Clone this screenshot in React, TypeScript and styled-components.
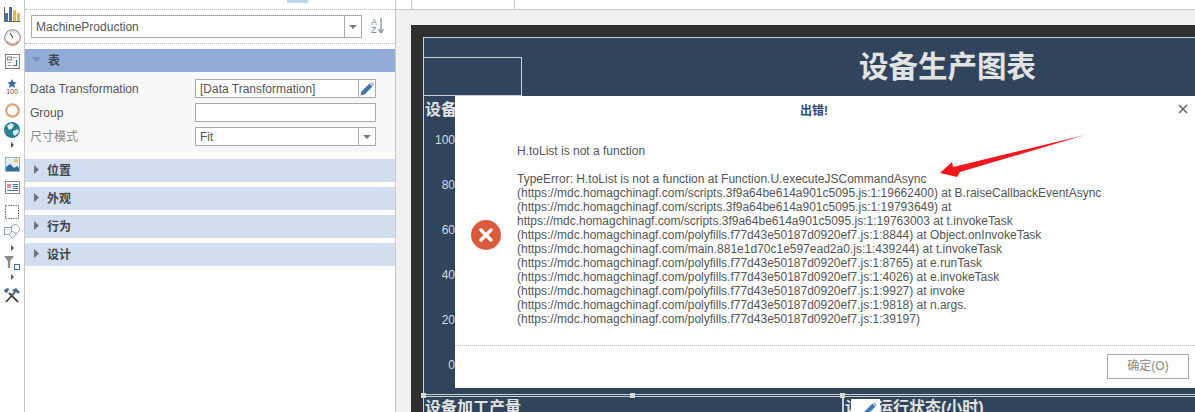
import styled, { createGlobalStyle } from 'styled-components'

const GlobalStyle = createGlobalStyle`
  html, body {
    margin: 0;
    padding: 0;
    background: #fff;
    overflow: hidden;
  }
  * {
    box-sizing: border-box;
  }
`

const errorLines = [
  'H.toList is not a function',
  '\u00a0',
  'TypeError: H.toList is not a function at Function.U.executeJSCommandAsync',
  '(https://mdc.homagchinagf.com/scripts.3f9a64be614a901c5095.js:1:19662400) at B.raiseCallbackEventAsync',
  '(https://mdc.homagchinagf.com/scripts.3f9a64be614a901c5095.js:1:19793649) at',
  'https://mdc.homagchinagf.com/scripts.3f9a64be614a901c5095.js:1:19763003 at t.invokeTask',
  '(https://mdc.homagchinagf.com/polyfills.f77d43e50187d0920ef7.js:1:8844) at Object.onInvokeTask',
  '(https://mdc.homagchinagf.com/main.881e1d70c1e597ead2a0.js:1:439244) at t.invokeTask',
  '(https://mdc.homagchinagf.com/polyfills.f77d43e50187d0920ef7.js:1:8765) at e.runTask',
  '(https://mdc.homagchinagf.com/polyfills.f77d43e50187d0920ef7.js:1:4026) at e.invokeTask',
  '(https://mdc.homagchinagf.com/polyfills.f77d43e50187d0920ef7.js:1:9927) at invoke',
  '(https://mdc.homagchinagf.com/polyfills.f77d43e50187d0920ef7.js:1:9818) at n.args.',
  '(https://mdc.homagchinagf.com/polyfills.f77d43e50187d0920ef7.js:1:39197)',
]

const axisLabels = ['100', '80', '60', '40', '20', '0']
const collapsedSections = ['位置', '外观', '行为', '设计']

const Caret = () => (
  <svg width="5" height="9" viewBox="0 0 5 9">
    <path d="M0 0l5 4.5L0 9z" fill="#6b7580" />
  </svg>
)

const DropArrow = () => (
  <svg width="8" height="4" viewBox="0 0 8 4">
    <path d="M0 0h8L4 4z" fill="#7a7a7a" />
  </svg>
)

const Pencil = () => (
  <svg width="14" height="14" viewBox="0 0 14 14">
    <path d="M0.5 13.5l1-4L9.5 1.5l3 3-8 8z" fill="#3f77ad" />
    <path d="M10.5 0.8l.8-.4 2.3 2.3-.6 1z" fill="#3f77ad" />
  </svg>
)

const ToolIcons = () => (
  <Tools>
    <ToolSlot $height={22}>
      <svg width="16" height="15" viewBox="0 0 16 15">
        <rect x="1" y="6" width="3" height="8" fill="#3f70a8" />
        <rect x="5" y="0" width="3" height="14" fill="#3f70a8" />
        <rect x="9" y="3" width="3" height="11" fill="#e2b93f" />
        <rect x="13" y="6" width="3" height="8" fill="#e2b93f" />
        <path d="M0 14.5h16M0.5 0v15" stroke="#666" />
      </svg>
    </ToolSlot>
    <ToolSlot $height={25}>
      <svg width="17" height="17" viewBox="0 0 17 17">
        <circle cx="8.5" cy="8.5" r="7.8" fill="#fff" stroke="#777" />
        <path d="M2.8 12a6.6 6.6 0 0 0 11.4 0" fill="none" stroke="#dc9b86" strokeWidth="1.6" />
        <path d="M2.2 7a6.6 6.6 0 0 1 12.6 0" fill="none" stroke="#d9d9d9" strokeWidth="1" />
        <path d="M6 4l3 5" stroke="#444" strokeWidth="1.1" />
      </svg>
    </ToolSlot>
    <ToolSlot $height={25}>
      <svg width="15" height="15" viewBox="0 0 15 15">
        <rect x="0.5" y="0.5" width="14" height="14" fill="#fff" stroke="#808080" />
        <rect x="2.5" y="3" width="4" height="3" fill="none" stroke="#808080" />
        <path d="M8 3.5h4.5M2.5 8.5h4M2.5 11.5h4" stroke="#a0a0a0" />
        <path d="M11.5 6v5.5H8" fill="none" stroke="#2f6da8" strokeWidth="1.2" />
      </svg>
    </ToolSlot>
    <ToolSlot $height={24}>
      <StarIcon>
        <svg width="10" height="9" viewBox="0 0 11 10">
          <path d="M5.5 0l1.6 3.4 3.7.4-2.8 2.4.9 3.8-3.4-2-3.4 2 .9-3.8L.2 3.8l3.7-.4z" fill="#3e67a6" />
        </svg>
        <StarValue>100</StarValue>
      </StarIcon>
    </ToolSlot>
    <ToolSlot $height={19}>
      <svg width="15" height="15" viewBox="0 0 15 15">
        <circle cx="7.5" cy="7.5" r="6.2" fill="none" stroke="#dfa473" strokeWidth="2.2" />
      </svg>
    </ToolSlot>
    <ToolSlot $height={20}>
      <svg width="16" height="16" viewBox="0 0 16 16">
        <circle cx="8" cy="8" r="8" fill="#2a7f96" />
        <path d="M3 4l4-3 3 2-2 4-3 1zM9 9l5-2 1 3-4 4-2-2z" fill="#d8eef2" />
      </svg>
    </ToolSlot>
    <ToolSlot $height={15}>
      <TinyCaret />
    </ToolSlot>
    <ToolSlot $height={24}>
      <svg width="15" height="15" viewBox="0 0 15 15">
        <rect x="0.5" y="0.5" width="14" height="14" fill="#e4edf6" stroke="#9cb0c4" />
        <circle cx="11" cy="3.5" r="2" fill="#e9bd6f" />
        <path d="M1 14V10l4-3 4 4 3-2 2 2v3z" fill="#2f6f9f" />
      </svg>
    </ToolSlot>
    <ToolSlot $height={24}>
      <svg width="15" height="13" viewBox="0 0 15 13">
        <rect x="0.5" y="0.5" width="14" height="12" fill="#fff" stroke="#7c8b99" />
        <rect x="2" y="3" width="4" height="4" fill="#e58aa0" />
        <path d="M7.5 3.5h5.5M7.5 5.5h5.5M7.5 7.5h5.5M2 9.5h11" stroke="#3f70a8" />
      </svg>
    </ToolSlot>
    <ToolSlot $height={19}>
      <svg width="14" height="14" viewBox="0 0 14 14">
        <rect x="0.5" y="0.5" width="13" height="13" fill="none" stroke="#666" strokeDasharray="1.5 1" />
      </svg>
    </ToolSlot>
    <ToolSlot $height={21}>
      <svg width="16" height="15" viewBox="0 0 16 15">
        <circle cx="11" cy="5" r="4.5" fill="#fff" stroke="#8aa3ba" />
        <rect x="0.5" y="3.5" width="7" height="7" fill="#fff" stroke="#8aa3ba" />
        <path d="M8.5 7l3.5 3.5L8.5 14.5 5 10.5z" fill="#fff" stroke="#8aa3ba" />
      </svg>
    </ToolSlot>
    <ToolSlot $height={11}>
      <TinyCaret />
    </ToolSlot>
    <ToolSlot $height={18}>
      <svg width="16" height="14" viewBox="0 0 16 14">
        <path d="M0 0h10L6.2 5v7H3.8V5z" fill="#8a8a8a" />
        <rect x="10.5" y="8.5" width="5" height="5" fill="#fff" stroke="#3f70a8" />
      </svg>
    </ToolSlot>
    <ToolSlot $height={14}>
      <TinyCaret />
    </ToolSlot>
    <ToolSlot $height={16}>
      <svg width="16" height="15" viewBox="0 0 16 15">
        <path d="M2 14L11 4M14 14L5 5" stroke="#444" strokeWidth="1.8" />
        <path d="M8 2l4-2 4 4-2 2-2-2-2 0zM1 1l3-1 1 1-1 3-2 1-2-2z" fill="#45719c" />
      </svg>
    </ToolSlot>
  </Tools>
)

const App = () => {
  return (
    <>
      <GlobalStyle />
      <Page>
        <ToolIcons />

        <Panel>
          <PanelTop>
            <PanelTab />
          </PanelTop>
          <SelectorBar>
            <ObjectSelect>
              <SelectValue>MachineProduction</SelectValue>
              <SelectButton>
                <DropArrow />
              </SelectButton>
            </ObjectSelect>
            <SortIcon>
              <SortLetters>
                <span>A</span>
                <span>Z</span>
              </SortLetters>
              <svg width="6" height="16" viewBox="0 0 6 16">
                <path d="M3 0v14M0.5 11L3 15l2.5-4" fill="none" stroke="#666" />
              </svg>
            </SortIcon>
          </SelectorBar>

          <ActiveHeader>
            <svg width="9" height="5" viewBox="0 0 9 5">
              <path d="M0 0h9L4.5 5z" fill="#7b90ae" />
            </svg>
            <span>表</span>
          </ActiveHeader>

          <Rows>
            <Row>
              <RowLabel>Data Transformation</RowLabel>
              <Field>
                <FieldText>[Data Transformation]</FieldText>
                <FieldButton>
                  <Pencil />
                </FieldButton>
              </Field>
            </Row>
            <Row>
              <RowLabel>Group</RowLabel>
              <Field />
            </Row>
            <Row>
              <RowLabel $muted>尺寸模式</RowLabel>
              <Field>
                <FieldText>Fit</FieldText>
                <FieldButton>
                  <DropArrow />
                </FieldButton>
              </Field>
            </Row>
          </Rows>

          <Sections>
            {collapsedSections.map(title => (
              <SectionHeader key={title}>
                <Caret />
                <span>{title}</span>
              </SectionHeader>
            ))}
          </Sections>
        </Panel>

        <Designer>
          <Ruler>
            <RulerTick $left={15} />
            <RulerTick $left={118} />
          </Ruler>
          <Workspace>
            <Sheet>
              <ReportTitle>设备生产图表</ReportTitle>
              <TitleBox />
              <ChartHeading $left={2} $top={62}>设备</ChartHeading>
              <Axis>
                {axisLabels.map(label => (
                  <span key={label}>{label}</span>
                ))}
              </Axis>
              <SelectionLine />
              <SelectionDivider />
              <Handle $left={-2} />
              <Handle $left={207} />
              <Handle $left={417} />
              <ChartHeading $left={2} $top={360}>设备加工产量</ChartHeading>
              <ChartHeading $left={422} $top={360}>设备运行状态(小时)</ChartHeading>
              <EditBadge>
                <Pencil />
              </EditBadge>
            </Sheet>
          </Workspace>
        </Designer>

        <Dialog>
          <DialogHeader>
            <DialogTitle>出错!</DialogTitle>
            <CloseButton>
              <svg width="10" height="10" viewBox="0 0 10 10">
                <path d="M1 1l8 8M9 1L1 9" stroke="#6a6a6a" strokeWidth="1.7" />
              </svg>
            </CloseButton>
          </DialogHeader>
          <DialogBody>
            <ErrorIcon>
              <svg width="14" height="14" viewBox="0 0 14 14">
                <path d="M2 2l10 10M12 2L2 12" stroke="#fff" strokeWidth="3.4" strokeLinecap="round" />
              </svg>
            </ErrorIcon>
            <Message>
              {errorLines.map((line, i) => (
                <div key={i}>{line}</div>
              ))}
            </Message>
          </DialogBody>
          <DialogFooter>
            <OkButton>确定(O)</OkButton>
          </DialogFooter>
        </Dialog>

        <Arrow width="146" height="44" viewBox="0 0 146 44">
          <path d="M145 1L13 33 12 28 0 39 17 43 20 38z" fill="#f0171d" />
        </Arrow>
      </Page>
    </>
  )
}

export default App

const Page = styled.div`
  position: relative;
  display: flex;
  width: 1195px;
  height: 412px;
  overflow: hidden;
  background: #fff;
  font-family: "Liberation Sans", "Noto Sans CJK SC", sans-serif;
`

const Tools = styled.div`
  width: 25px;
  flex-shrink: 0;
  padding-top: 7px;
  display: flex;
  flex-direction: column;
  border-right: 1px solid #c9c9c9;
`

const ToolSlot = styled.div<{ $height: number }>`
  height: ${props => props.$height}px;
  flex-shrink: 0;
  display: flex;
  justify-content: center;
  align-items: flex-start;
`

const TinyCaret = styled.i`
  display: block;
  width: 0;
  height: 0;
  margin-left: 1px;
  border-left: 3px solid #555;
  border-top: 3px solid transparent;
  border-bottom: 3px solid transparent;
`

const StarIcon = styled.div`
  display: flex;
  flex-direction: column;
  align-items: center;
  height: 16px;
`

const StarValue = styled.span`
  font-size: 7px;
  line-height: 7px;
  color: #555;
`

const Panel = styled.div`
  width: 371px;
  flex-shrink: 0;
  border-right: 1px solid #c9c9c9;
`

const PanelTop = styled.div`
  height: 9px;
  padding-left: 262px;
`

const PanelTab = styled.div`
  width: 21px;
  height: 3px;
  background: #c3d5ec;
`

const SelectorBar = styled.div`
  height: 35px;
  padding: 5px 6px 0;
  display: flex;
  gap: 9px;
  border-top: 1px dotted #b9b9b9;
  border-bottom: 1px dotted #b9b9b9;
`

const ObjectSelect = styled.div`
  width: 331px;
  height: 23px;
  display: flex;
  border: 1px solid #aaa;
  background: #fff;
`

const SelectValue = styled.div`
  flex: 1;
  padding: 1px 0 0 4px;
  font-size: 12px;
  line-height: 21px;
  color: #555;
`

const SelectButton = styled.div`
  width: 17px;
  display: flex;
  align-items: center;
  justify-content: center;
  border-left: 1px solid #aaa;
`

const SortIcon = styled.div`
  display: flex;
  align-items: center;
  gap: 1px;
  height: 18px;
  margin-top: 2px;
`

const SortLetters = styled.div`
  display: flex;
  flex-direction: column;
  font-size: 9px;
  line-height: 8px;
  color: #6a7fae;
`

const ActiveHeader = styled.div`
  height: 23px;
  margin-top: 5px;
  padding: 0 0 2px 7px;
  display: flex;
  align-items: center;
  gap: 7px;
  background: #92acd8;
  font-size: 12px;
  font-weight: bold;
  color: #3f4650;
`

const Rows = styled.div`
  height: 81px;
  padding: 7px 19px 0 5px;
  display: flex;
  flex-direction: column;
  gap: 5px;
  background: #f8f8f8;
`

const Row = styled.div`
  display: flex;
  align-items: center;
  justify-content: space-between;
`

const RowLabel = styled.span<{ $muted?: boolean }>`
  font-size: 12px;
  line-height: 14px;
  color: ${props => (props.$muted ? '#8a8a8a' : '#555')};
`

const Field = styled.div`
  width: 181px;
  height: 19px;
  display: flex;
  border: 1px solid #aaa;
  background: #fff;
`

const FieldText = styled.div`
  flex: 1;
  padding: 1px 0 0 4px;
  font-size: 12px;
  line-height: 17px;
  color: #555;
`

const FieldButton = styled.div`
  width: 17px;
  display: flex;
  align-items: center;
  justify-content: center;
  border-left: 1px solid #aaa;
`

const Sections = styled.div`
  margin-top: 6px;
  display: flex;
  flex-direction: column;
  gap: 5px;
`

const SectionHeader = styled.div`
  height: 23px;
  padding: 0 0 3px 9px;
  display: flex;
  align-items: center;
  gap: 8px;
  background: #d2deef;
  font-size: 12px;
  font-weight: bold;
  color: #444;
`

const Designer = styled.div`
  flex: 1;
  display: flex;
  flex-direction: column;
`

const Ruler = styled.div`
  position: relative;
  height: 10px;
  border-bottom: 1px solid #c9c9c9;
`

const RulerTick = styled.i<{ $left: number }>`
  position: absolute;
  left: ${props => props.$left}px;
  top: 0;
  width: 1px;
  height: 9px;
  background: #c9c9c9;
`

const Workspace = styled.div`
  flex: 1;
  padding: 15px 0 0 15px;
  background: #f1f1f1;
  overflow: hidden;
`

const Sheet = styled.div`
  position: relative;
  height: 387px;
  background: #30455c;
  border: solid #2f2f2f;
  border-width: 12px 0 0 12px;
  box-shadow: inset 1px 1px 0 #c9d0d6;
`

const ReportTitle = styled.div`
  position: absolute;
  left: 436px;
  top: 13px;
  font-size: 29.5px;
  line-height: 34px;
  font-weight: bold;
  color: #e3e3e3;
`

const TitleBox = styled.div`
  position: absolute;
  left: 0;
  top: 20px;
  width: 99px;
  height: 39px;
  border: 1px solid #c9d0d6;
  border-left: none;
`

const ChartHeading = styled.div<{ $left: number; $top: number }>`
  position: absolute;
  left: ${props => props.$left}px;
  top: ${props => props.$top}px;
  font-size: 16px;
  line-height: 22px;
  font-weight: bold;
  color: #e3e3e3;
  white-space: nowrap;
`

const Axis = styled.div`
  position: absolute;
  left: 0;
  top: 96px;
  width: 32px;
  display: flex;
  flex-direction: column;
  gap: 31px;
  align-items: flex-end;
  font-size: 12px;
  line-height: 14px;
  color: #d5d9dd;
`

const SelectionLine = styled.div`
  position: absolute;
  left: 0;
  right: 0;
  top: 357px;
  height: 3px;
  border-top: 1px solid #c9d0d6;
  border-bottom: 1px solid #c9d0d6;
`

const SelectionDivider = styled.div`
  position: absolute;
  left: 419px;
  top: 358px;
  bottom: 0;
  width: 2px;
  background: #c9d0d6;
`

const Handle = styled.i<{ $left: number }>`
  position: absolute;
  left: ${props => props.$left}px;
  top: 356px;
  width: 5px;
  height: 5px;
  background: #d5d8db;
`

const EditBadge = styled.div`
  position: absolute;
  left: 428px;
  top: 362px;
  width: 29px;
  height: 15px;
  padding: 3px 0 0 12px;
  background: #fff;
`

const Dialog = styled.div`
  position: absolute;
  left: 455px;
  top: 96px;
  width: 740px;
  height: 292px;
  background: #fff;
  display: flex;
  flex-direction: column;
`

const DialogHeader = styled.div`
  position: relative;
  height: 26px;
  display: flex;
  align-items: center;
  justify-content: center;
`

const DialogTitle = styled.div`
  margin-right: 22px;
  font-size: 12px;
  font-weight: bold;
  color: #2c4a78;
`

const CloseButton = styled.div`
  position: absolute;
  right: 7px;
  top: 8px;
  display: flex;
`

const DialogBody = styled.div`
  height: 224px;
  padding: 22px 0 0 16px;
  display: flex;
  border-bottom: 1px dotted #b9b9b9;
`

const ErrorIcon = styled.div`
  width: 30px;
  height: 30px;
  margin: 76px 16px 0 0;
  flex-shrink: 0;
  display: flex;
  align-items: center;
  justify-content: center;
  border-radius: 50%;
  background: #d95b3b;
`

const Message = styled.div`
  font-size: 12px;
  line-height: 14px;
  color: #555;
  white-space: nowrap;
`

const DialogFooter = styled.div`
  flex: 1;
  padding: 8px 6px 0 0;
  display: flex;
  justify-content: flex-end;
`

const OkButton = styled.div`
  width: 82px;
  height: 25px;
  border: 1px solid #aaa;
  font-size: 12px;
  line-height: 23px;
  text-align: center;
  color: #888;
`

const Arrow = styled.svg`
  position: absolute;
  left: 940px;
  top: 134px;
`
